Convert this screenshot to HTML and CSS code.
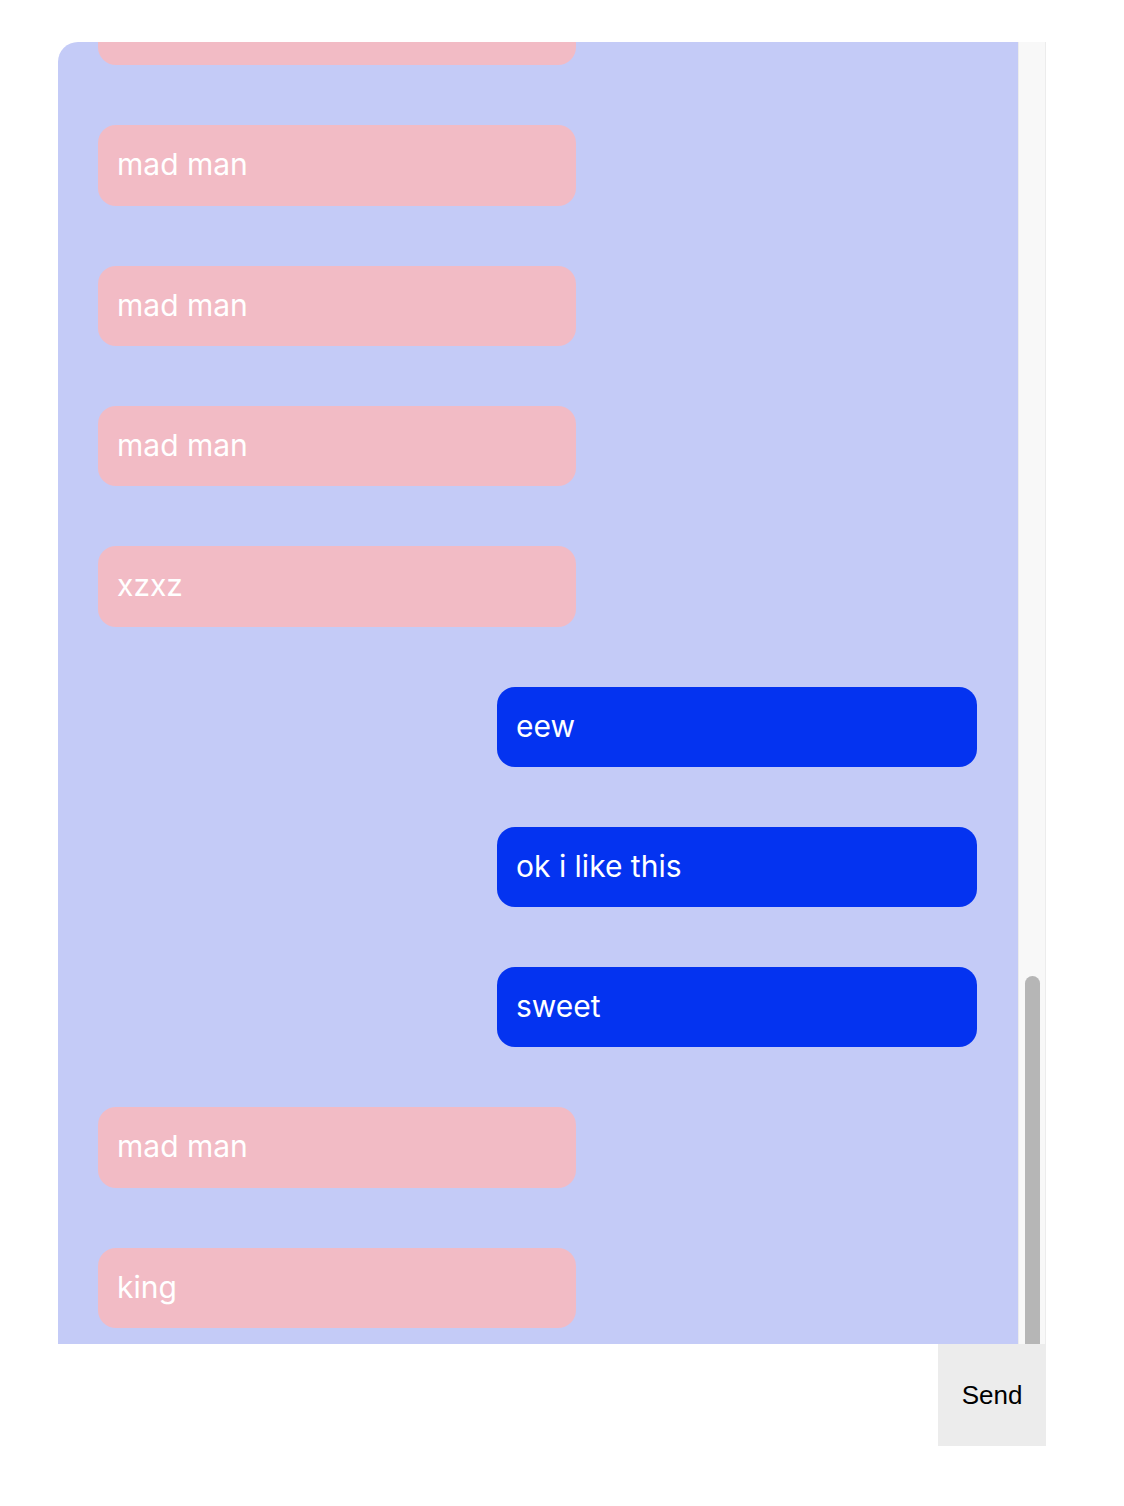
FILE: index.html
```html
<!DOCTYPE html>
<html lang="en">
<head>
<meta charset="utf-8">
<title>Chat</title>
<link rel="stylesheet" href="styles.css">
</head>
<body>
<div class="chat">
  <div class="pane">
    <div class="messages">
      <div class="list">
        <div class="msg them">mad man</div>
        <div class="msg them">mad man</div>
        <div class="msg them">mad man</div>
        <div class="msg them">mad man</div>
        <div class="msg them">xzxz</div>
        <div class="msg me">eew</div>
        <div class="msg me">ok i like this</div>
        <div class="msg me">sweet</div>
        <div class="msg them">mad man</div>
        <div class="msg them">king</div>
      </div>
    </div>
    <div class="scrollbar">
      <div class="thumb"></div>
    </div>
  </div>
  <form class="composer">
    <input class="field" type="text" aria-label="Message">
    <button class="send" type="button">Send</button>
  </form>
</div>
</body>
</html>
```
FILE: styles.css
```css
html, body {
  margin: 0;
  padding: 0;
  background: #ffffff;
}

body {
  font-family: Inter, "Noto Sans", sans-serif;
}

.chat {
  width: 988px;
  margin: 42px 0 0 58px;
}

.pane {
  display: flex;
  height: 1302px;
}

.messages {
  flex: 1;
  overflow: hidden;
  background: #c4cbf7;
  border-top-left-radius: 20px;
  display: flex;
  flex-direction: column;
  justify-content: flex-end;
}

.list {
  flex-shrink: 0;
  display: flex;
  flex-direction: column;
  gap: 60px;
  padding: 0 41px 16px 40px;
}

.msg {
  padding: 19px 20px 21px 19px;
  height: 40.3px;
  line-height: 40.3px;
  font-size: 30px;
  color: #ffffff;
  border-radius: 18px;
}

.them {
  background: #f2bbc5;
  width: 439px;
}

.me {
  background: #0433f0;
  width: 441px;
  margin-left: auto;
}

.scrollbar {
  width: 26px;
  background: #f8f8f8;
  border-left: 1px solid #ececec;
  border-right: 1px solid #ececec;
  display: flex;
  flex-direction: column;
  justify-content: flex-end;
  align-items: center;
}

.thumb {
  width: 15px;
  height: 368px;
  margin-left: 1px;
  background: #b6b6b6;
  border-radius: 8px 8px 0 0;
}

.composer {
  display: flex;
  margin: 0;
  height: 102px;
}

.field {
  flex: 1;
  border: none;
  outline: none;
  background: #ffffff;
  margin: 0;
  padding: 0 16px;
  font-size: 26px;
}

.send {
  width: 108px;
  border: none;
  margin: 0;
  background: #ececec;
  font-family: "Liberation Sans", Arial, sans-serif;
  font-size: 26px;
  color: #000000;
  padding: 0;
}
```
